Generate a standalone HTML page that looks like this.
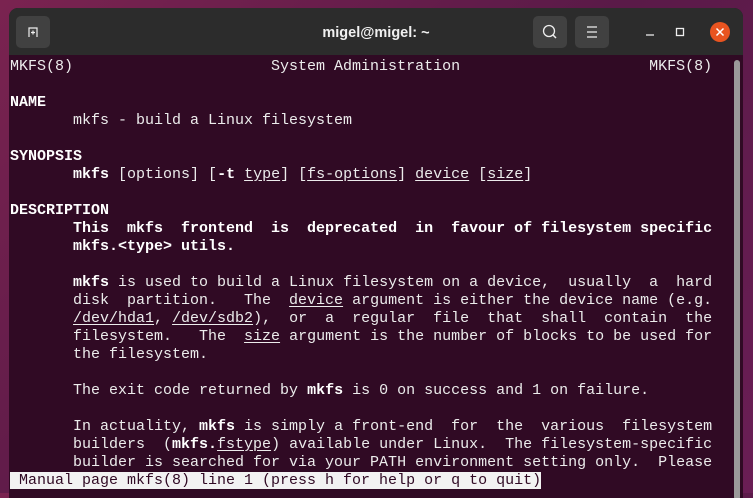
<!DOCTYPE html>
<html><head><meta charset="utf-8"><style>
html,body{margin:0;padding:0;width:753px;height:493px;overflow:hidden;background:linear-gradient(135deg,#7a2350 0%,#5a1a48 50%,#6a1e55 100%);}
.win{position:absolute;left:9px;top:8px;width:734px;height:490px;background:#300a24;border-radius:9px 9px 0 0;overflow:hidden;}
.tb{position:absolute;left:0;top:0;width:734px;height:47px;background:#2c2c2c;}
.btn{position:absolute;top:8px;width:34px;height:32px;background:#414141;border-radius:5px;}
.title{position:absolute;left:0;width:734px;top:17px;text-align:center;color:#f0f0f0;font:bold 14.5px "Liberation Sans",sans-serif;}
.term{position:absolute;left:1px;top:50px;font:15px/18px "Liberation Mono",monospace;color:#ececec;white-space:pre;}
b{font-weight:bold;color:#fff}
u{text-decoration:underline;text-underline-offset:2px}
.st{background:#f2f2f2;color:#300a24;}
.sb{position:absolute;left:725px;top:52px;width:6px;height:440px;background:#9a9a9a;border-radius:3px;}
</style></head><body>
<div class="win">
<div class="tb">
<div class="btn" style="left:7px"><svg width="34" height="32"><path d="M13 21 V12 H21 V21 M15 16.5 H19 M17 14.5 V18.5" stroke="#eee" stroke-width="1.2" fill="none"/></svg></div>
<div class="title">migel@migel: ~</div>
<div class="btn" style="left:524px"><svg width="34" height="32"><circle cx="16" cy="15" r="5.5" stroke="#eee" stroke-width="1.3" fill="none"/><path d="M20 19 L23 22" stroke="#eee" stroke-width="1.5"/></svg></div>
<div class="btn" style="left:566px"><svg width="34" height="32"><path d="M12 11 H22 M12 16 H22 M12 21 H22" stroke="#eee" stroke-width="1.2"/></svg></div>
<svg style="position:absolute;left:620px;top:0px" width="110" height="47"><path d="M17 27 H25" stroke="#eee" stroke-width="1.3"/><rect x="47.5" y="20.5" width="7" height="7" stroke="#eee" stroke-width="1.3" fill="none"/><circle cx="91" cy="24" r="10" fill="#e95420"/><path d="M87.5 20.5 L94.5 27.5 M94.5 20.5 L87.5 27.5" stroke="#fff" stroke-width="1.5"/></svg>
</div>
<div class="term">MKFS(8)                      System Administration                     MKFS(8)

<b>NAME</b>
       mkfs - build a Linux filesystem

<b>SYNOPSIS</b>
       <b>mkfs</b> [options] [<b>-t</b> <u>type</u>] [<u>fs-options</u>] <u>device</u> [<u>size</u>]

<b>DESCRIPTION</b>
       <b>This  mkfs  frontend  is  deprecated  in  favour of filesystem specific</b>
       <b>mkfs.&lt;type&gt; utils.</b>

       <b>mkfs</b> is used to build a Linux filesystem on a device,  usually  a  hard
       disk  partition.   The  <u>device</u> argument is either the device name (e.g.
       <u>/dev/hda1</u>, <u>/dev/sdb2</u>),  or  a  regular  file  that  shall  contain  the
       filesystem.   The  <u>size</u> argument is the number of blocks to be used for
       the filesystem.

       The exit code returned by <b>mkfs</b> is 0 on success and 1 on failure.

       In actuality, <b>mkfs</b> is simply a front-end  for  the  various  filesystem
       builders  (<b>mkfs.</b><u>fstype</u>) available under Linux.  The filesystem-specific
       builder is searched for via your PATH environment setting only.  Please
<span class="st"> Manual page mkfs(8) line 1 (press h for help or q to quit)</span></div>
<div class="sb"></div>
</div>
</body></html>
